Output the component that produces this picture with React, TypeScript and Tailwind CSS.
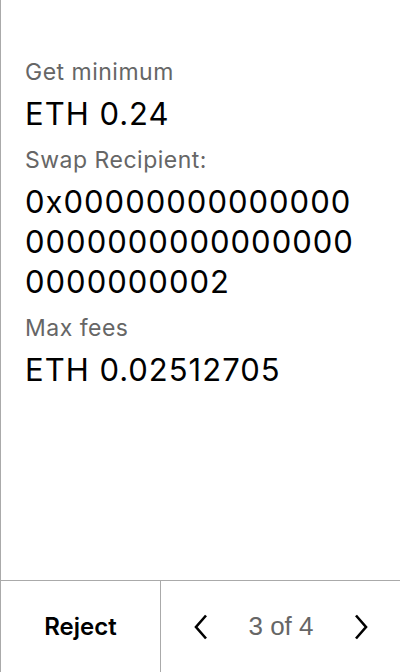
import React from "react";

const Chevron = ({ dir }: { dir: "left" | "right" }) => (
  <svg width="16" height="26" viewBox="0 0 16 26" fill="none" stroke="#000" strokeWidth="2.6" strokeLinecap="butt" strokeLinejoin="miter">
    {dir === "left" ? <path d="M13 1.5 L3 13 L13 24.5" /> : <path d="M3 1.5 L13 13 L3 24.5" />}
  </svg>
);

export default function App() {
  const inter = { fontFamily: "Inter, 'Noto Sans', sans-serif" };
  return (
    <div className="w-[400px] h-[672px] bg-white border-l border-[#aaaaaa] flex flex-col" style={inter}>
      <div className="flex-1 pl-6 pr-[39px] pt-[58px]">
        <div className="text-[23px] tracking-[0.5px] leading-7 text-[#666666]">Get minimum</div>
        <div className="mt-2 text-[31px] tracking-[1px] leading-10 text-black">ETH 0.24</div>
        <div className="mt-3 text-[23px] tracking-[0.5px] leading-7 text-[#666666]">Swap Recipient:</div>
        <div className="mt-2 text-[31px] tracking-[1px] leading-10 text-black break-all">0x0000000000000000000000000000000000000002</div>
        <div className="mt-3 text-[23px] tracking-[0.5px] leading-7 text-[#666666]">Max fees</div>
        <div className="mt-2 text-[31px] tracking-[1px] leading-10 text-black">ETH 0.02512705</div>
      </div>
      <div className="h-[92px] border-t border-[#aaaaaa] flex">
        <button className="w-[160px] border-r border-[#aaaaaa] flex items-center justify-center text-[24px] font-semibold text-black">Reject</button>
        <div className="flex-1 flex items-center justify-between pl-[32px] pr-[31px]">
          <Chevron dir="left" />
          <span className="text-[26px] text-[#666666]" style={{ fontFamily: "'Liberation Sans', Arial, sans-serif" }}>3 of 4</span>
          <Chevron dir="right" />
        </div>
      </div>
    </div>
  );
}
